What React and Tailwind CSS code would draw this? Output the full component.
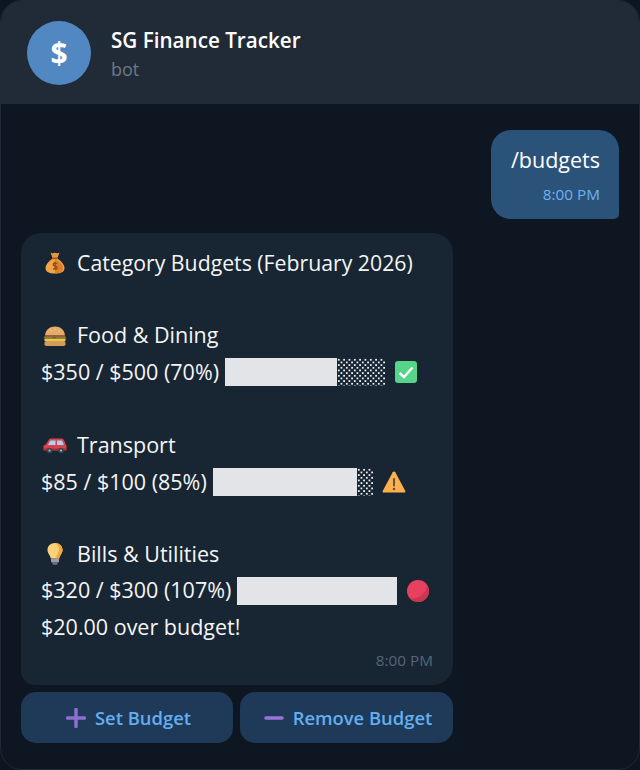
import React from 'react';

const font = { fontFamily: '"Open Sans", "Noto Sans", sans-serif' };

function MoneyBag() {
  return (
    <svg width="24" height="24" viewBox="0 0 24 24">
      <path d="M7.500 1.500c1.500 1 3 .6 4.500.2 1.500.4 3 .8 4.500-.2l-2.200 6H9.700z" fill="#e8963a" />
      <path d="M9.500 7.500h5C18.500 10.500 21.500 14 21.500 17c0 4-3.500 5.500-9.500 5.500S2.500 21 2.500 17c0-3 3-6.500 7-9.500z" fill="#f2a544" />
      <path d="M12 8.500c5 2 8 5 8 8.500 0 3.500-3 5-8 5.500z" fill="#dd7f2c" />
      <rect x="9" y="6.500" width="6" height="1.800" rx=".8" fill="#a85a1e" />
      <path d="M14.200 12.500c-1.500-1-4-.7-4 1 0 2.200 4 1.200 4 3.200 0 1.700-2.600 1.900-4.200.9M12 10.800v8" fill="none" stroke="#8f4d18" strokeWidth="1.300" />
    </svg>
  );
}

function Burger() {
  return (
    <svg width="24" height="24" viewBox="0 0 24 24">
      <path d="M2 11.500C2.500 5.500 7 2.500 12 2.500s9.500 3 10 9z" fill="#e3ad68" />
      <path d="M.5 14c2-2.500 4.500-1 7-1s4 1.200 6 0 6-1.500 10 1l-2 1.500H3z" fill="#5c9e3c" />
      <rect x="1.500" y="11.500" width="21" height="1.800" rx=".9" fill="#c9483a" />
      <rect x="1.500" y="15" width="21" height="2" fill="#f2c443" />
      <rect x="1.500" y="17" width="21" height="5" rx="1.800" fill="#d79a5a" />
      <circle cx="8" cy="6.500" r=".6" fill="#f6e3b5" />
      <circle cx="12" cy="5" r=".6" fill="#f6e3b5" />
      <circle cx="16" cy="7" r=".6" fill="#f6e3b5" />
    </svg>
  );
}

function Car() {
  return (
    <svg width="24" height="24" viewBox="0 0 24 24">
      <path d="M.5 17v-3.500c0-1 .8-1.500 2-1.700L6 6.500C6.500 5.800 7.300 5.500 8.500 5.500H18c1.500 0 2.700.7 3.200 2L23.500 13v4z" fill="#d8434f" />
      <path d="M7.500 7.500h5V12H4.800zM14 7.500h4c.8 0 1.200.4 1.500 1l1.300 3.500H14z" fill="#a9d4ee" />
      <rect x=".5" y="15.500" width="23" height="2.200" rx="1" fill="#a72f3a" />
      <circle cx="6.500" cy="17.500" r="2.800" fill="#3d4450" />
      <circle cx="18" cy="17.500" r="2.800" fill="#3d4450" />
      <circle cx="6.500" cy="17.500" r="1.100" fill="#aeb6bf" />
      <circle cx="18" cy="17.500" r="1.100" fill="#aeb6bf" />
    </svg>
  );
}

function Bulb() {
  return (
    <svg width="24" height="24" viewBox="0 0 24 24">
      <path d="M12 1c-4.500 0-7.500 3.200-7.500 7 0 3.400 2.700 5 3.300 8.500h8.400c.6-3.500 3.300-5.100 3.300-8.500 0-3.800-3-7-7.500-7z" fill="#fcd278" />
      <path d="M12 1c4.500 0 7.500 3.200 7.500 7 0 3.400-2.700 5-3.300 8.500H13c.5-4 3-6 3-9 0-3-2-5.500-4-6.500z" fill="#f3a93a" />
      <rect x="8" y="16.500" width="8" height="4" rx="1" fill="#9a9ea6" />
      <rect x="9.500" y="20.500" width="5" height="2.300" rx="1" fill="#6f747c" />
    </svg>
  );
}

function Check() {
  return (
    <svg width="24" height="24" viewBox="0 0 24 24">
      <rect x="1" y="1" width="22" height="22" rx="3" fill="#56d48a" />
      <path d="M5.500 13l4.500 4L18.500 7.500" fill="none" stroke="#fff" strokeWidth="2.400" />
    </svg>
  );
}

function Warning() {
  return (
    <svg width="24" height="24" viewBox="0 0 24 24">
      <path d="M12 1.500c.6 0 1 .3 1.300.8L23.300 21c.4.800 0 1.500-.9 1.500H1.600c-.9 0-1.300-.7-.9-1.500L10.700 2.300c.3-.5.700-.8 1.300-.8z" fill="#fdb04c" />
      <rect x="11" y="8" width="2" height="8.500" rx="1" fill="#5d5348" />
      <circle cx="12" cy="19" r="1.300" fill="#5d5348" />
    </svg>
  );
}

function RedCircle() {
  return (
    <svg width="24" height="24" viewBox="0 0 24 24">
      <circle cx="12" cy="12" r="11" fill="#e8415f" />
      <path d="M12 23a11 11 0 0 0 11-11c0-3-1-5-2.500-7 .8 5-1.500 8-4 10.500S10 19.500 5 19.500A11 11 0 0 0 12 23z" fill="#c9364f" />
    </svg>
  );
}

// the block characters of the progress bar, ░ part is a dot screen
function Bar({ full, empty }) {
  return (
    <div className="flex h-[28px] shrink-0">
      <div className="h-full bg-[#e2e4e8]" style={{ width: full }} />
      {empty > 0 && (
        <svg width={empty} height="28" shapeRendering="crispEdges">
          <defs>
            <pattern id={`dots${empty}`} width="5.330" height="5.330" patternUnits="userSpaceOnUse">
              <rect x="1" y="1" width="1.600" height="1.600" fill="#eef1f4" />
              <rect x="3.670" y="3.670" width="1.600" height="1.600" fill="#eef1f4" />
            </pattern>
          </defs>
          <rect width={empty} height="28" fill={`url(#dots${empty})`} />
        </svg>
      )}
    </div>
  );
}

function Heading({ icon, children, size = 'text-[21.500px]' }) {
  return (
    <div className={`flex h-[36.400px] items-center ${size}`}>
      <div className="flex w-[36px] shrink-0 justify-start pl-[2px]">{icon}</div>
      <span>{children}</span>
    </div>
  );
}

function BudgetRow({ label, full, empty, icon }) {
  return (
    <div className="flex h-[36.400px] items-center">
      <span>{label}</span>
      <div className="ml-[6px]">
        <Bar full={full} empty={empty} />
      </div>
      <div className="ml-[9px]">{icon}</div>
    </div>
  );
}

function ActionButton({ icon, label, width }) {
  return (
    <button className={`flex h-[51px] items-center justify-center gap-[9px] rounded-[15px] bg-[#1f3a58] pl-[3px] text-[18.400px] font-semibold text-[#64aef0] ${width}`}>
      {icon}
      {label}
    </button>
  );
}

export default function App() {
  return (
    <div className="h-[770px] w-[640px] overflow-hidden bg-[#0d1520]" style={font}>
      <div className="flex h-full flex-col overflow-hidden rounded-[22px] border border-[#1e2a36] bg-[#0e1621]">
        <header className="flex h-[103px] shrink-0 items-center gap-[20px] bg-[#212b37] pl-[26px]">
          <div className="flex h-[64px] w-[64px] items-center justify-center rounded-full bg-[#5288c1] text-[30px] font-bold text-white">$</div>
          <div className="flex flex-col pt-[3px]">
            <span className="text-[20.650px] leading-[30px] font-semibold text-white">SG Finance Tracker</span>
            <span className="mt-[1px] text-[18px] leading-[27px] text-[#6c7883]">bot</span>
          </div>
        </header>

        <main className="flex flex-1 flex-col pt-[26px] pr-[20px] pl-[20px]">
          <div className="flex h-[89px] w-[128px] flex-col items-end self-end rounded-[20px] rounded-br-[5px] bg-[#2b5278] pt-[13px] pr-[19px]">
            <span className="text-[21.500px] leading-[34px] text-white">/budgets</span>
            <span className="mt-[7px] text-[15.300px] leading-[20px] text-[#6db3f2]">8:00 PM</span>
          </div>

          <div className="mt-[14px] w-[432px] rounded-[20px] rounded-bl-[14px] bg-[#182533] px-[20px] pt-[12px] text-[21.500px] text-[#f5f5f5]">
            <Heading icon={<MoneyBag />} size="text-[21.250px]">Category Budgets (February 2026)</Heading>
            <div className="h-[36px]" />
            <Heading icon={<Burger />}>Food &amp; Dining</Heading>
            <BudgetRow label="$350 / $500 (70%)" full={112} empty={48} icon={<Check />} />
            <div className="h-[37px]" />
            <Heading icon={<Car />}>Transport</Heading>
            <BudgetRow label="$85 / $100 (85%)" full={144} empty={16} icon={<Warning />} />
            <div className="h-[36px]" />
            <Heading icon={<Bulb />}>Bills &amp; Utilities</Heading>
            <BudgetRow label="$320 / $300 (107%)" full={160} empty={0} icon={<RedCircle />} />
            <div className="flex h-[36.400px] items-center">$20.00 over budget!</div>
            <div className="pt-[5px] pb-[15px] text-right text-[15.300px] leading-[20px] text-[#56677a]">8:00 PM</div>
          </div>

          <div className="mt-[7px] flex w-[432px] gap-[7px]">
            <ActionButton
              width="w-[212px]"
              label="Set Budget"
              icon={
                <svg width="20" height="20" viewBox="0 0 20 20">
                  <path d="M10 1.500v17M1.500 10h17" stroke="#8e6fd0" strokeWidth="3.500" strokeLinecap="round" />
                </svg>
              }
            />
            <ActionButton
              width="w-[213px]"
              label="Remove Budget"
              icon={
                <svg width="20" height="20" viewBox="0 0 20 20">
                  <path d="M2 10h16" stroke="#9a74d8" strokeWidth="3.500" strokeLinecap="round" />
                </svg>
              }
            />
          </div>
        </main>
      </div>
    </div>
  );
}
